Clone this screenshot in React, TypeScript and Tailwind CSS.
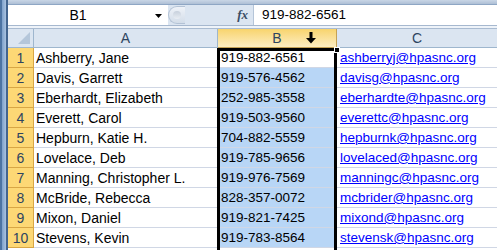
const rows = [
  ["Ashberry, Jane", "919-882-6561", "ashberryj@hpasnc.org"],
  ["Davis, Garrett", "919-576-4562", "davisg@hpasnc.org"],
  ["Eberhardt, Elizabeth", "252-985-3558", "eberhardte@hpasnc.org"],
  ["Everett, Carol", "919-503-9560", "everettc@hpasnc.org"],
  ["Hepburn, Katie H.", "704-882-5559", "hepburnk@hpasnc.org"],
  ["Lovelace, Deb", "919-785-9656", "lovelaced@hpasnc.org"],
  ["Manning, Christopher L.", "919-976-7569", "manningc@hpasnc.org"],
  ["McBride, Rebecca", "828-357-0072", "mcbrider@hpasnc.org"],
  ["Mixon, Daniel", "919-821-7425", "mixond@hpasnc.org"],
  ["Stevens, Kevin", "919-783-8564", "stevensk@hpasnc.org"],
];

function DownArrow() {
  return (
    <svg width="10" height="12" viewBox="0 0 10 12" className="absolute right-[20px] top-[3px]">
      <rect x="3.5" y="0" width="3" height="7" fill="#000" />
      <path d="M0 6 H10 L5 11.5 Z" fill="#000" />
    </svg>
  );
}

export default function App() {
  return (
    <div className="w-[497px] h-[250px] overflow-hidden flex bg-white font-['Liberation_Sans',Arial,sans-serif] text-[13px] text-black">
      {/* left window edge */}
      <div className="w-[8px] shrink-0 flex">
        <div className="w-[2px] bg-[#4d74a3]" />
        <div className="w-[4px] bg-gradient-to-r from-[#7ea1cb] to-[#a9c2e0]" />
        <div className="w-[2px] bg-[#42648f]" />
      </div>

      <div className="flex-1 flex flex-col relative">
        {/* ribbon bottom */}
        <div className="h-[5px] bg-gradient-to-b from-[#c9d6e6] to-[#aebfd5] border-b border-[#8ea6c4]" />

        {/* formula bar */}
        <div className="h-[21px] flex items-stretch bg-[#dbe5f1] border-b border-[#a6b8cf] text-[14px]">
          <div className="w-[160px] bg-white relative flex items-center">
            <span className="w-[140px] text-center">B1</span>
            <svg width="7" height="4" viewBox="0 0 7 4" className="absolute left-[147px] top-[9px]">
              <path d="M0 0 H7 L3.5 4 Z" fill="#000" />
            </svg>
          </div>
          <div className="w-[17px] my-[1px] rounded-l-full border border-r-0 border-[#b3c2d5] bg-gradient-to-b from-[#eef2f8] to-[#d3dde9] flex items-center justify-center">
            <div className="w-[8px] h-[8px] rounded-full bg-gradient-to-b from-[#c7d0dc] to-[#e9eef4]" />
          </div>
          <div className="w-[68px] flex items-center justify-end pr-[5px]">
            <span className="font-['Liberation_Serif',serif] italic font-bold text-[13px] text-[#3a4d66]">fx</span>
          </div>
          <div className="flex-1 bg-white border-l border-[#b5c5d8] flex items-center pl-[8px] text-[13.5px]">919-882-6561</div>
        </div>

        <div className="h-[3px] bg-[#eef3f9] border-b border-[#a9bbd1]" />

        {/* column headers */}
        <div className="h-[19px] flex text-[#2e4460] text-[14px]">
          <div className="w-[26px] bg-[#dbe5f1] border-r border-b border-[#9eb6ce] relative">
            <svg width="12" height="12" viewBox="0 0 12 12" className="absolute right-[3px] bottom-[3px]">
              <path d="M12 0 V12 H0 Z" fill="#b4c6da" />
            </svg>
          </div>
          <div className="w-[184px] bg-[#dbe5f1] border-r border-b border-[#9eb6ce] flex items-center justify-center">A</div>
          <div className="w-[119px] bg-gradient-to-b from-[#f8d46c] to-[#fdedc0] border-r border-b border-[#c5a255] flex items-center justify-center relative">
            B
            <DownArrow />
          </div>
          <div className="flex-1 bg-[#dbe5f1] border-b border-[#9eb6ce] flex items-center justify-center">C</div>
        </div>

        {/* rows */}
        {rows.map((r, i) => (
          <div key={i} className="h-[20px] flex">
            <div className="w-[26px] bg-[#fdd875] border-r border-b border-[#d8a645] flex items-center justify-center text-[#2e4460] text-[14px] pt-[1px]">
              {i + 1}
            </div>
            <div className="w-[184px] border-r border-b border-[#d0d7e5] flex items-center pl-[2px] pt-[1px] whitespace-nowrap text-[14px]">{r[0]}</div>
            <div className={`w-[119px] border-r border-b border-[#d0d7e5] flex items-center pl-[3px] pt-[1px] text-[13.5px] ${i === 0 ? "bg-white" : "bg-[#b8d6f6]"}`}>
              {r[1]}
            </div>
            <div className="flex-1 border-b border-[#d0d7e5] flex items-center pl-[3px] pt-[1px] text-[13.5px] whitespace-nowrap">
              <span className="text-[#0000ff] underline">{r[2]}</span>
            </div>
          </div>
        ))}

        {/* selection border */}
        <div className="absolute left-[209px] top-[48px] w-[120px] h-[215px] border-[3px] border-black pointer-events-none" />
        <div className="absolute left-[326px] top-[47px] w-[6px] h-[6px] bg-black border border-white" />
      </div>
    </div>
  );
}
